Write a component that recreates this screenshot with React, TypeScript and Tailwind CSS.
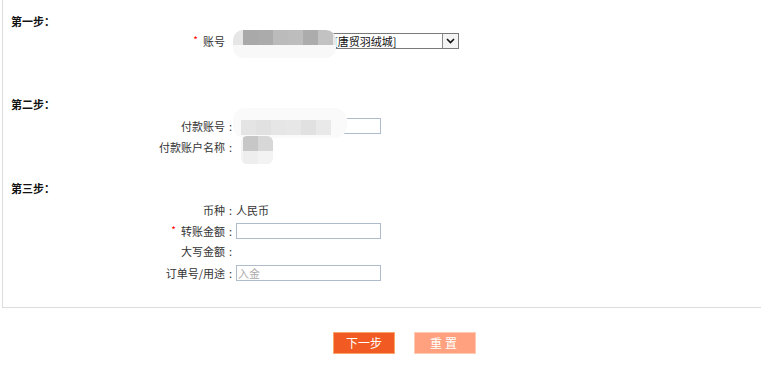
import React from "react";

const font = { fontFamily: '"Noto Sans CJK SC", "Noto Sans", sans-serif' };

function Label({ text, star }: { text: string; star?: boolean }) {
  return (
    <div className="w-[233px] shrink-0 flex justify-end items-center text-[11px] text-[#333] leading-[16px]">
      {star && <span className="text-[#ff0000] text-[10px] mr-[5px] relative top-[-1px]">*</span>}
      <span>{text}</span>
      <span className="inline-block w-[11px] text-center">:</span>
    </div>
  );
}

function Input({ placeholder }: { placeholder?: string }) {
  return (
    <div className="w-[145px] h-[16px] border border-[#aebccc] bg-white text-[11px] leading-[14px] text-[#aaa] pl-[1px]">
      {placeholder}
    </div>
  );
}

function Heading({ text, className }: { text: string; className: string }) {
  return (
    <div className={"h-[14px] leading-[14px] pl-[8px] text-[11px] font-bold text-[#111] " + className}>
      {text}
    </div>
  );
}

export default function App() {
  return (
    <div className="w-[762px] h-[369px] bg-white relative" style={font}>
      <div className="ml-[2px] w-[759px] h-[308px] border-l border-b border-[#dcdcdc] pt-[14px]">
        <Heading text="第一步：" className="" />
        <div className="mt-[5px] h-[16px] flex relative">
          <div className="w-[233px] shrink-0 flex justify-end items-center text-[11px] text-[#333] leading-[16px] pr-[11px]">
            <span className="text-[#ff0000] text-[10px] mr-[5px] relative top-[-1px]">*</span>
            <span>账号</span>
          </div>
          <div className="w-[223px] h-[16px] border border-[#7a7a7a] bg-white flex items-center justify-between">
            <span className="text-[11px] leading-[14px] text-[#111] pl-[97px]">[唐贸羽绒城]</span>
            <div className="w-[16px] h-[14px] border-l border-[#8a8a8a] flex items-center justify-center bg-[#f4f4f4]">
              <svg width="9" height="6" viewBox="0 0 9 6">
                <path d="M1 1 L4.5 4.5 L8 1" stroke="#111" strokeWidth="1.6" fill="none" />
              </svg>
            </div>
          </div>
          {/* mosaic */}
          <div className="absolute left-[230px] top-[-3px] w-[103px] h-[28px] rounded-[10px] bg-[#f8f8f8] overflow-hidden">
            <div className="flex h-[15px]">
              <div className="w-[10px] bg-[#e6e6e6]" />
              <div className="w-[15px] bg-[#a9a9a9]" />
              <div className="w-[15px] bg-[#ababab]" />
              <div className="w-[15px] bg-[#bbbbbb]" />
              <div className="w-[15px] bg-[#bdbdbd]" />
              <div className="w-[15px] bg-[#acacac]" />
              <div className="w-[15px] bg-[#c2c2c2]" />
              <div className="w-[3px] bg-[#e8e8e8]" />
            </div>
          </div>
        </div>

        <Heading text="第二步：" className="mt-[48px]" />
        <div className="mt-[7px] h-[16px] flex relative">
          <Label text="付款账号" />
          <Input />
          <div className="absolute left-[230px] top-[-10px] w-[114px] h-[30px] rounded-[12px] bg-[#fafafa] overflow-hidden">
            <div className="flex h-[15px] mt-[12px] ml-[8px]">
              <div className="w-[15px] bg-[#e4e4e4]" />
              <div className="w-[15px] bg-[#e1e1e1]" />
              <div className="w-[15px] bg-[#e6e6e6]" />
              <div className="w-[15px] bg-[#e7e7e7]" />
              <div className="w-[15px] bg-[#e1e1e1]" />
              <div className="w-[15px] bg-[#e9e9e9]" />
            </div>
          </div>
        </div>
        <div className="mt-[5px] h-[16px] flex relative">
          <Label text="付款账户名称" />
          <div className="absolute left-[238px] top-[-3px] w-[32px] h-[28px] rounded-[6px] bg-[#f4f4f4] overflow-hidden">
            <div className="flex h-[15px] ml-[2px]">
              <div className="w-[15px] bg-[#c7c7c7]" />
              <div className="w-[15px] bg-[#d7d7d7]" />
            </div>
            <div className="flex h-[13px] ml-[2px]">
              <div className="w-[15px] bg-[#eeeeee]" />
              <div className="w-[15px] bg-[#f3f3f3]" />
            </div>
          </div>
        </div>

        <Heading text="第三步：" className="mt-[26px]" />
        <div className="mt-[7px] h-[16px] flex">
          <Label text="币种" />
          <span className="text-[11px] leading-[16px] text-[#333]">人民币</span>
        </div>
        <div className="mt-[5px] h-[16px] flex">
          <Label text="转账金额" star />
          <Input />
        </div>
        <div className="mt-[4px] h-[16px] flex">
          <Label text="大写金额" />
        </div>
        <div className="mt-[6px] h-[16px] flex">
          <Label text="订单号/用途" />
          <Input placeholder="入金" />
        </div>
      </div>

      <div className="mt-[24px] flex pl-[333px] gap-[19px]">
        <button className="w-[62px] h-[22px] border border-[#f9a66c] bg-[#f15a22] text-white text-[12px] leading-[20px]">
          下一步
        </button>
        <button className="w-[62px] h-[22px] border border-[#ffcab3] bg-[#ffa07e] text-white text-[12px] leading-[20px] tracking-[3px]">
          重置
        </button>
      </div>
    </div>
  );
}
